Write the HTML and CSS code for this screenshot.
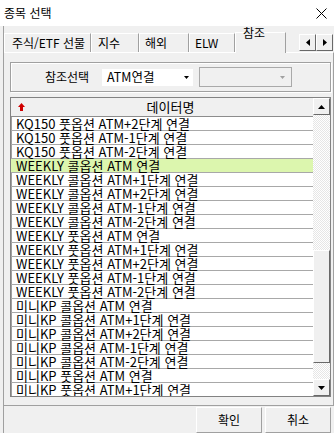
FILE: index.html
```html
<!DOCTYPE html>
<html lang="ko">
<head>
<meta charset="utf-8">
<title>종목 선택</title>
<link rel="stylesheet" href="styles.css">
</head>
<body>
<div class="titlebar">
  <span class="title">종목 선택</span>
  <svg class="close" width="11" height="11" viewBox="0 0 11 11"><path d="M0.5 0.5L10.5 10.5M10.5 0.5L0.5 10.5" stroke="#000" stroke-width="1"/></svg>
</div>
<div class="client">
  <div class="tabs">
    <div class="tab t1">주식/ETF 선물</div>
    <div class="tab t2">지수</div>
    <div class="tab t3">해외</div>
    <div class="tab t4">ELW</div>
    <div class="tab sel"><span>참조</span></div>
    <div class="spin">
      <div class="sbtn"><svg width="4" height="7" viewBox="0 0 4 7"><path d="M4 0L0 3.5L4 7Z" fill="#000"/></svg></div>
      <div class="sbtn"><svg width="4" height="7" viewBox="0 0 4 7"><path d="M0 0L4 3.5L0 7Z" fill="#000"/></svg></div>
    </div>
  </div>
  <div class="panel">
    <div class="group">
      <span class="lbl">참조선택</span>
      <div class="combo"><span class="val">ATM연결</span><svg width="5" height="3" viewBox="0 0 5 3"><path d="M0 0H5L2.5 3Z" fill="#000"/></svg></div>
      <div class="combo dis"><svg width="5" height="3" viewBox="0 0 5 3"><path d="M0 0H5L2.5 3Z" fill="#a0a0a0"/></svg></div>
    </div>
    <div class="list">
      <div class="lmain">
        <div class="hdr">
          <svg class="sort" width="7" height="8" viewBox="0 0 7 8"><path d="M3.5 0L7 4H5V8H2V4H0Z" fill="#d00000"/></svg>
          <span class="htext">데이터명</span>
        </div>
        <div class="rows">
          <div class="row">KQ150 풋옵션 ATM+2단계 연결</div>
          <div class="row">KQ150 풋옵션 ATM-1단계 연결</div>
          <div class="row">KQ150 풋옵션 ATM-2단계 연결</div>
          <div class="row hl">WEEKLY 콜옵션 ATM 연결</div>
          <div class="row">WEEKLY 콜옵션 ATM+1단계 연결</div>
          <div class="row">WEEKLY 콜옵션 ATM+2단계 연결</div>
          <div class="row">WEEKLY 콜옵션 ATM-1단계 연결</div>
          <div class="row">WEEKLY 콜옵션 ATM-2단계 연결</div>
          <div class="row">WEEKLY 풋옵션 ATM 연결</div>
          <div class="row">WEEKLY 풋옵션 ATM+1단계 연결</div>
          <div class="row">WEEKLY 풋옵션 ATM+2단계 연결</div>
          <div class="row">WEEKLY 풋옵션 ATM-1단계 연결</div>
          <div class="row">WEEKLY 풋옵션 ATM-2단계 연결</div>
          <div class="row">미니KP 콜옵션 ATM 연결</div>
          <div class="row">미니KP 콜옵션 ATM+1단계 연결</div>
          <div class="row">미니KP 콜옵션 ATM+2단계 연결</div>
          <div class="row">미니KP 콜옵션 ATM-1단계 연결</div>
          <div class="row">미니KP 콜옵션 ATM-2단계 연결</div>
          <div class="row">미니KP 풋옵션 ATM 연결</div>
          <div class="row">미니KP 풋옵션 ATM+1단계 연결</div>
        </div>
      </div>
      <div class="vscroll">
        <div class="abtn"><svg width="7" height="4" viewBox="0 0 7 4"><path d="M0 4H7L3.5 0Z" fill="#000"/></svg></div>
        <div class="track">
          <div class="tspace"></div>
          <div class="thumb"></div>
          <div class="tspace2"></div>
        </div>
        <div class="abtn"><svg width="7" height="4" viewBox="0 0 7 4"><path d="M0 0H7L3.5 4Z" fill="#000"/></svg></div>
      </div>
    </div>
  </div>
  <div class="btns">
    <div class="btn">확인</div>
    <div class="btn">취소</div>
  </div>
</div>
</body>
</html>
```

FILE: styles.css
```css
* { box-sizing: border-box; }
html, body { margin: 0; padding: 0; }
body {
  width: 334px;
  height: 433px;
  overflow: hidden;
  background: #f0f0f0;
  font-family: "Noto Sans CJK KR", "Noto Sans", sans-serif;
  font-size: 12px;
  color: #000;
}
.titlebar {
  height: 26px;
  background: #fff;
  display: flex;
  align-items: center;
  justify-content: space-between;
  padding: 0 7px 0 4px;
}
.title { font-size: 12px; line-height: 14px; }
.close { display: block; }

.client {
  margin-left: 3px;
  height: 407px;
  border-left: 1px solid #a0a0a0;
}
.tabs {
  height: 26px;
  display: flex;
  align-items: flex-end;
}
.tab {
  height: 19px;
  border-top: 1px solid #fff;
  border-left: 1px solid #fff;
  border-right: 1px solid #a0a0a0;
  padding: 2px 0 0 7px;
  line-height: 14px;
  white-space: nowrap;
}
.t1 { width: 87px; }
.t2 { width: 48px; padding-left: 6px; }
.t3 { width: 50px; padding-left: 5px; }
.t4 { width: 46px; padding-left: 5px; }
.tab.sel {
  width: 51px;
  height: 21px;
  margin-bottom: -1px;
  background: #f0f0f0;
  padding-left: 7px;
  position: relative;
  z-index: 1;
}
.tab.sel span { display: block; margin-top: -9px; }
.spin {
  margin-left: 13px;
  margin-bottom: 1px;
  display: flex;
  height: 17px;
}
.sbtn {
  width: 17px;
  height: 17px;
  border-top: 1px solid #fff;
  border-left: 1px solid #fff;
  border-right: 1px solid #696969;
  border-bottom: 1px solid #696969;
  display: flex;
  align-items: center;
  justify-content: center;
}

.panel {
  height: 354px;
  border-top: 1px solid #fff;
  border-right: 1px solid #a0a0a0;
  border-bottom: 1px solid #a0a0a0;
  padding: 9px 2px 0 6px;
}
.group {
  height: 30px;
  border: 1px solid #a0a0a0;
  box-shadow: inset 1px 1px #fff, 1px 1px #fff;
  display: flex;
  align-items: center;
  padding-left: 34px;
}
.lbl { line-height: 14px; width: 48px; margin-right: 9px; }
.combo {
  width: 91px;
  height: 17px;
  background: #fff;
  display: flex;
  align-items: center;
  justify-content: space-between;
  padding: 0 4px 0 5px;
  line-height: 14px;
  font-size: 12.5px;
}
.combo svg { display: block; }
.combo.dis {
  width: 93px;
  height: 20px;
  margin-left: 6px;
  background: #f0f0f0;
  border: 1px solid #a9a9a9;
  justify-content: flex-end;
  padding-right: 6px;
}

.list {
  margin-top: 5px;
  height: 300px;
  border: 1px solid #828282;
  box-shadow: inset 1px 1px #a0a0a0;
  display: flex;
  background: #fff;
}
.lmain { flex: 1; overflow: hidden; display: flex; flex-direction: column; }
.hdr {
  height: 19px;
  flex: none;
  background: #f0f0f0;
  border-bottom: 1px solid #8c8c8c;
  display: flex;
  align-items: center;
  padding-left: 7px;
}
.sort { display: block; flex: none; }
.htext { flex: 1; text-align: center; line-height: 14px; font-size: 13px; padding-left: 3px; }
.rows { flex: 1; overflow: hidden; }
.row {
  height: 14px;
  border-bottom: 1px solid #a8a8a8;
  padding-left: 5px;
  line-height: 13px;
  font-size: 13px;
  white-space: nowrap;
}
.row.hl { background: #dcf6ae; }

.vscroll {
  width: 17px;
  flex: none;
  display: flex;
  flex-direction: column;
}
.abtn {
  height: 17px;
  flex: none;
  background: #f0f0f0;
  border-top: 1px solid #fff;
  border-left: 1px solid #fff;
  border-right: 1px solid #696969;
  border-bottom: 1px solid #696969;
  display: flex;
  align-items: center;
  justify-content: center;
}
.abtn svg { display: block; }
.track {
  flex: 1;
  display: flex;
  flex-direction: column;
  background: repeating-conic-gradient(#fff 0 25%, #e6e6e6 0 50%) 0 0 / 2px 2px;
}
.tspace { height: 135px; }
.thumb {
  height: 113px;
  background: #f0f0f0;
  border-top: 1px solid #fff;
  border-left: 1px solid #fff;
  border-right: 1px solid #696969;
  border-bottom: 1px solid #696969;
}
.tspace2 { flex: 1; }

.btns {
  display: flex;
  justify-content: flex-end;
  gap: 3px;
  padding: 1px 0 0 0;
  margin-right: 3px;
}
.btn {
  width: 66px;
  height: 26px;
  display: flex;
  align-items: center;
  justify-content: center;
  line-height: 14px;
  border-top: 1px solid #fff;
  border-left: 1px solid #fff;
  border-right: 1px solid #a0a0a0;
  border-bottom: 1px solid #a0a0a0;
}
```
